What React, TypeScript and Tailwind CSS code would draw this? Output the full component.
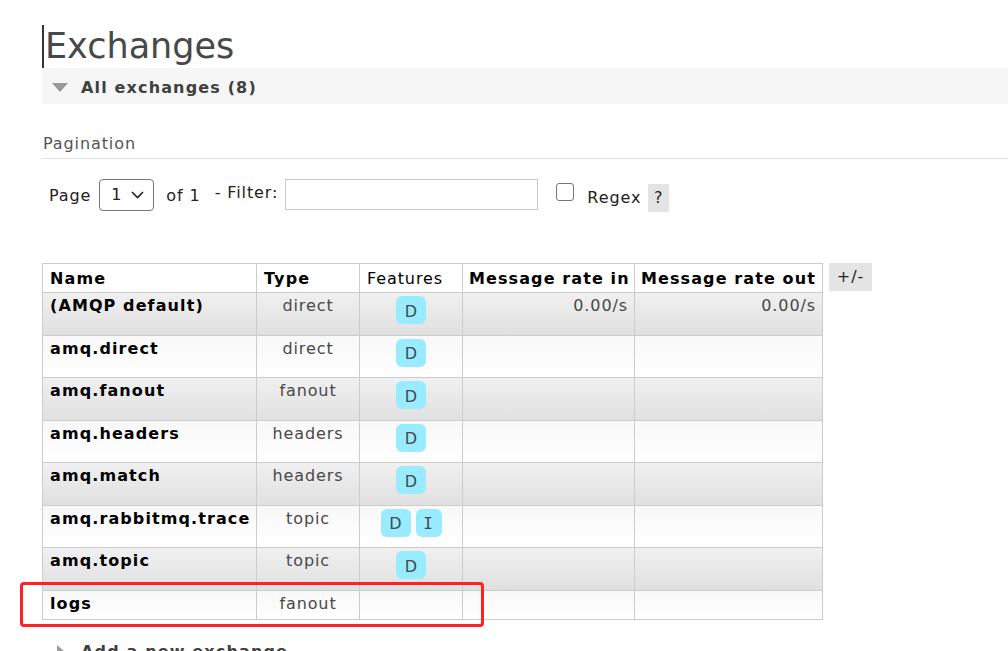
import React from "react"

type Row = {
  name: string
  type: string
  features: string[]
  rateIn?: string
  rateOut?: string
}

const rows: Row[] = [
  { name: "(AMQP default)", type: "direct", features: ["D"], rateIn: "0.00/s", rateOut: "0.00/s" },
  { name: "amq.direct", type: "direct", features: ["D"] },
  { name: "amq.fanout", type: "fanout", features: ["D"] },
  { name: "amq.headers", type: "headers", features: ["D"] },
  { name: "amq.match", type: "headers", features: ["D"] },
  { name: "amq.rabbitmq.trace", type: "topic", features: ["D", "I"] },
  { name: "amq.topic", type: "topic", features: ["D"] },
  { name: "logs", type: "fanout", features: [] },
]

function Badge({ label }: { label: string }) {
  return (
    <span
      className={
        "inline-flex h-[28px] items-center justify-center rounded-md bg-[#99ebff] pt-[3px] text-[16px] text-[#484848] " +
        (label === "I" ? "w-[26px] font-['DejaVu_Sans_Mono',monospace]" : "w-[30px] tracking-normal")
      }
    >
      {label}
    </span>
  )
}

export default function App() {
  return (
    <div className="relative min-h-screen overflow-hidden bg-white text-[16px] tracking-[0.9px] font-['DejaVu_Sans',Verdana,sans-serif] text-black">
      <div className="pl-[42px] pt-[25px]">
        <h1 className="h-[43px] border-l-2 border-[#333] pl-[1px] text-[35px] leading-[42px] tracking-normal text-[#484848]">
          Exchanges
        </h1>

        <div className="flex h-[36px] items-center bg-[#f6f6f6] pl-[10px]">
          <svg width="16" height="10" viewBox="0 0 16 10" className="mt-[4px]">
            <polygon points="0,0 16,0 8,9" fill="#999" />
          </svg>
          <span className="ml-[13px] mt-[3px] font-bold tracking-[1.15px] text-[#404040]">All exchanges (8)</span>
        </div>

        <div className="mt-[29px] border-b border-[#e0e0e0] pb-[4px] pl-[1px] leading-[21px] text-[#555]">
          Pagination
        </div>

        <div className="mt-[18px] flex items-center pl-[7px] text-[#222]">
          <span className="mt-[2px]">Page</span>
          <div className="ml-[8px] flex h-[32px] w-[55px] items-center rounded border border-[#767676] pl-[11px] pr-[9px]">
            <span>1</span>
            <svg width="13" height="8" viewBox="0 0 13 8" className="ml-auto">
              <polyline points="1,1 6.5,6.5 12,1" fill="none" stroke="#222" strokeWidth="1.6" />
            </svg>
          </div>
          <span className="ml-[12px] mt-[2px]">of 1</span>
          <span className="ml-[14px] -mt-[3px]">- Filter:</span>
          <div className="ml-[7px] h-[31px] w-[253px] border border-[#c8c8c8] bg-white" />
          <span className="ml-[18px] mt-[-6px] h-[18px] w-[18px] rounded-[3px] border border-[#767676]" />
          <span className="ml-[13px] mt-[6px]">Regex</span>
          <span className="ml-[7px] mt-[7px] flex h-[28px] w-[21px] items-center justify-center bg-[#e4e4e4]">?</span>
        </div>

        <div className="mt-[51px] flex items-start">
          <table className="w-[780px] table-fixed border-collapse">
            <colgroup>
              <col className="w-[214px]" />
              <col className="w-[103px]" />
              <col className="w-[103px]" />
              <col className="w-[172px]" />
              <col className="w-[188px]" />
            </colgroup>
            <thead>
              <tr className="h-[29px] bg-white">
                <th className="border border-[#cccccc] px-[7px] pt-[2px] text-left font-bold tracking-[1.1px]">Name</th>
                <th className="border border-[#cccccc] px-[7px] pt-[2px] text-left font-bold tracking-[1.1px]">Type</th>
                <th className="border border-[#cccccc] px-[7px] pt-[2px] text-left font-normal">Features</th>
                <th className="border border-[#cccccc] px-[6px] pt-[2px] text-left font-bold tracking-[1.1px] whitespace-nowrap">Message rate in</th>
                <th className="border border-[#cccccc] px-[6px] pt-[2px] text-left font-bold tracking-[1.1px] whitespace-nowrap">Message rate out</th>
              </tr>
            </thead>
            <tbody>
              {rows.map((r, i) => (
                <tr
                  key={r.name}
                  className={
                    (i % 2 === 0
                      ? "bg-gradient-to-b from-[#f0f0f0] to-[#e0e0e0]"
                      : "bg-gradient-to-b from-[#f8f8f8] to-[#ffffff]") +
                    (r.features.length ? " h-[42.5px]" : " h-[29px]")
                  }
                >
                  <td className="border border-[#cccccc] px-[7px] pt-[3px] align-top leading-[20px] font-bold tracking-[1.1px] whitespace-nowrap">
                    {r.name}
                  </td>
                  <td className="border border-[#cccccc] pt-[3px] align-top text-center leading-[20px] text-[#484848]">
                    {r.type}
                  </td>
                  <td className="border border-[#cccccc] pt-[3px] align-top text-center">
                    <div className="flex justify-center gap-[5px]">
                      {r.features.map((f) => (
                        <Badge key={f} label={f} />
                      ))}
                    </div>
                  </td>
                  <td className="border border-[#cccccc] px-[6px] pt-[3px] align-top text-right leading-[20px] text-[#484848]">
                    {r.rateIn}
                  </td>
                  <td className="border border-[#cccccc] px-[6px] pt-[3px] align-top text-right leading-[20px] text-[#484848]">
                    {r.rateOut}
                  </td>
                </tr>
              ))}
            </tbody>
          </table>
          <span className="ml-[6px] flex h-[28px] w-[43px] items-center justify-center bg-[#e4e4e4] text-[#222]">
            +/-
          </span>
        </div>

        <div className="mt-[20px] flex items-center pl-[15px]">
          <svg width="8" height="14" viewBox="0 0 8 14">
            <polygon points="0,0 8,7 0,14" fill="#999" />
          </svg>
          <span className="ml-[16px] font-bold tracking-[1.15px] text-[#404040]">Add a new exchange</span>
        </div>
      </div>

      <div className="pointer-events-none absolute left-[20px] top-[582px] h-[45px] w-[464px] rounded-[4px] border-[3px] border-[#f22]" />
    </div>
  )
}
